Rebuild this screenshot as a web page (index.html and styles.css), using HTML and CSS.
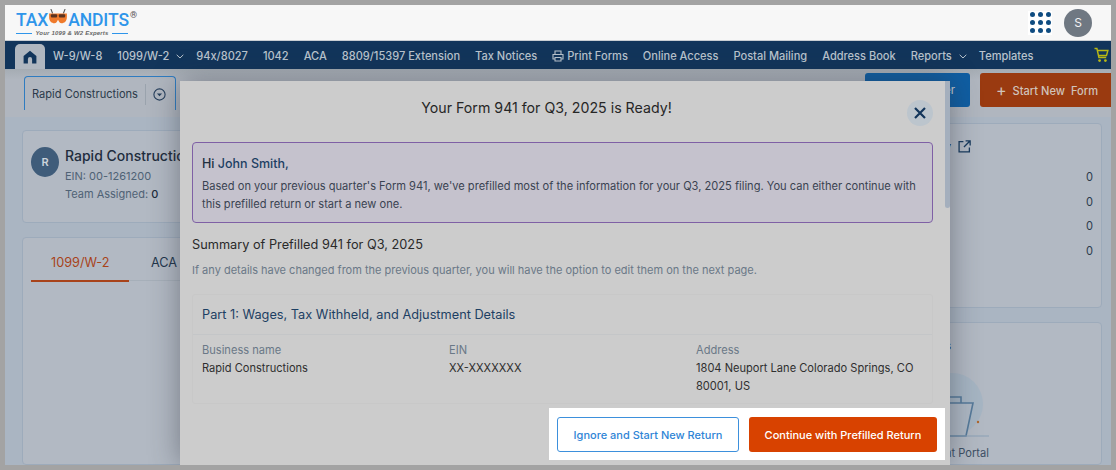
FILE: index.html
```html
<!DOCTYPE html>
<html lang="en">
<head>
<meta charset="utf-8">
<title>Form 941 Ready</title>
<link rel="stylesheet" href="styles.css">
</head>
<body>
<div class="frame">
  <header class="topbar">
    <div class="logo">
      <div class="logo-main">
        <span>TAX</span>
        <svg class="owl" width="20" height="16" viewBox="0 0 22 18">
          <path d="M3 0l2 5M19 0l-2 5" stroke="#555" stroke-width="1.2" fill="none"/>
          <path d="M1 5h20v4c0 5-3 7-6 7-2 0-3-2-4-4-1 2-2 4-4 4-3 0-6-2-6-7z" fill="#ef7a2c"/>
          <rect x="3" y="6" width="7" height="3.5" rx="1" fill="#5a3320"/>
          <rect x="12" y="6" width="7" height="3.5" rx="1" fill="#5a3320"/>
        </svg>
        <span>ANDITS</span>
        <span class="reg">®</span>
      </div>
      <div class="logo-tag"><i class="rule"></i><span>Your 1099 &amp; W2 Experts</span><i class="rule"></i></div>
    </div>
    <div class="top-actions">
      <div class="dots">
        <i></i><i></i><i></i><i></i><i></i><i></i><i></i><i></i><i></i>
      </div>
      <div class="user">S</div>
    </div>
  </header>

  <nav class="nav">
    <a class="home" aria-label="Home">
      <svg width="14" height="14" viewBox="0 0 14 14"><path d="M7 .8L.6 6v7.4h4.3V9.2a2.1 2.1 0 0 1 4.2 0v4.2h4.3V6z" fill="#12355b"/></svg>
    </a>
    <a>W-9/W-8</a>
    <a class="has-caret">1099/W-2<svg class="caret" width="8" height="5" viewBox="0 0 8 5"><path d="M.7.8L4 4l3.3-3.2" fill="none" stroke="#b9c3cd" stroke-width="1"/></svg></a>
    <a>94x/8027</a>
    <a>1042</a>
    <a>ACA</a>
    <a>8809/15397 Extension</a>
    <a>Tax Notices</a>
    <a class="print"><svg width="12" height="12" viewBox="0 0 12 12"><path d="M3 4V1h6v3M3 9H1V4.5h10V9H9M3 7.5h6V11H3z" fill="none" stroke="#b9c3cd" stroke-width="1.1"/></svg>Print Forms</a>
    <a>Online Access</a>
    <a>Postal Mailing</a>
    <a>Address Book</a>
    <a class="has-caret">Reports<svg class="caret" width="8" height="5" viewBox="0 0 8 5"><path d="M.7.8L4 4l3.3-3.2" fill="none" stroke="#b9c3cd" stroke-width="1"/></svg></a>
    <a>Templates</a>
    <svg class="cart" width="15" height="16" viewBox="0 0 15 16"><path d="M.5 1.5h2.4l2 9h7.3M3.3 3.5h10.6l-1.4 5H4.4" fill="none" stroke="#b9b814" stroke-width="1.4"/><circle cx="5.6" cy="13.6" r="1.4" fill="#b9b814"/><circle cx="11.4" cy="13.6" r="1.4" fill="#b9b814"/></svg>
  </nav>

  <section class="toolbar">
    <div class="biz-tab">
      <span class="biz-name">Rapid Constructions</span>
      <span class="biz-btn"><svg width="13" height="13" viewBox="0 0 13 13"><circle cx="6.5" cy="6.5" r="5.6" fill="none" stroke="#263f5c" stroke-width="1.1"/><path d="M3.9 5.4h5.2L6.5 8.3z" fill="#263f5c"/></svg></span>
    </div>
    <div class="tool-actions">
      <button class="btn-blue">Start New Filer</button>
      <button class="btn-rust"><span class="plus">+</span>Start New&nbsp; Form</button>
    </div>
  </section>

  <main class="main">
    <div class="col-left">
      <div class="card biz-card">
        <div class="avatar">R</div>
        <div>
          <div class="biz-title">Rapid Constructions</div>
          <div class="biz-meta">EIN: 00-1261200</div>
          <div class="biz-meta">Team Assigned: <b>0</b></div>
        </div>
      </div>
      <div class="card tabs-card">
        <div class="tabs">
          <span class="tab active">1099/W-2</span>
          <span class="tab">ACA</span>
        </div>
      </div>
    </div>
    <div class="col-right">
      <div class="card stats">
        <div class="stats-head"><span>Summary</span>
          <svg width="13" height="13" viewBox="0 0 12 12"><path d="M5 1.5H1v9.5h9.5V7M7 .8h4.2V5M11 1L5.5 6.5" fill="none" stroke="#173a5e" stroke-width="1.2"/></svg>
        </div>
        <div class="stat">0</div>
        <div class="stat">0</div>
        <div class="stat">0</div>
        <div class="stat">0</div>
      </div>
      <div class="card portal">
        <div class="portal-head">Tools</div>
        <div class="portal-item">
          <svg width="76" height="66" viewBox="0 0 76 66">
            <circle cx="33" cy="32" r="31" fill="#a6b5c3"/>
            <path d="M8 31h46l-7 33H14z" fill="#aeb8c4" stroke="#567a9a" stroke-width="1.6"/>
            <path d="M20 31v-6h22v6" fill="none" stroke="#567a9a" stroke-width="1.6"/>
            <circle cx="59" cy="50" r="1.2" fill="#b0662c"/>
            <path d="M22 64h48" stroke="#8aa0b5" stroke-width="1"/>
          </svg>
          <span>Client Portal</span>
        </div>
      </div>
    </div>
  </main>

  <div class="modal">
    <div class="modal-scroll">
      <div class="modal-head">
        <h2>Your Form 941 for Q3, 2025 is Ready!</h2>
        <button class="close" aria-label="Close">
          <svg width="12" height="12" viewBox="0 0 12 12"><path d="M1 1l10 10M11 1L1 11" stroke="#12355b" stroke-width="2.2" fill="none"/></svg>
        </button>
      </div>
      <div class="notice">
        <div class="hi">Hi <span>John Smith,</span></div>
        <p>Based on your previous quarter's Form 941, we've prefilled most of the information for your Q3, 2025 filing. You can either continue with this prefilled return or start a new one.</p>
      </div>
      <h3 class="summary">Summary of Prefilled 941 for Q3, 2025</h3>
      <p class="hint">If any details have changed from the previous quarter, you will have the option to edit them on the next page.</p>
      <div class="part">
        <div class="part-head">Part 1: Wages, Tax Withheld, and Adjustment Details</div>
        <div class="part-body">
          <div class="field"><label>Business name</label><div>Rapid Constructions</div></div>
          <div class="field"><label>EIN</label><div>XX-XXXXXXX</div></div>
          <div class="field"><label>Address</label><div>1804 Neuport Lane Colorado Springs, CO 80001, US</div></div>
        </div>
      </div>
    </div>
    <div class="modal-foot">
      <button class="btn-outline">Ignore and Start New Return</button>
      <button class="btn-primary">Continue with Prefilled Return</button>
    </div>
    <div class="thumb"></div>
  </div>
</div>
</body>
</html>
```

FILE: styles.css
```css
* { box-sizing: border-box; }
html, body { margin: 0; padding: 0; height: 100%; }
body { background: #a3a3a3; font-family: Inter, "Liberation Sans", sans-serif; overflow: hidden; }
button { font-family: inherit; cursor: pointer; }
.frame { position: relative; margin: 5px; width: 1106px; height: 460px; overflow: hidden; background: #aab5c2; display: flex; flex-direction: column; }

.topbar { height: 36px; flex: none; background: #f7f7f7; border-bottom: 1px solid #c9ced3; display: flex; justify-content: space-between; align-items: center; padding: 0 19px 0 11px; }
.logo { display: flex; flex-direction: column; margin-top: 1px; }
.logo-main { display: flex; align-items: center; font-family: Roboto, "Liberation Sans", sans-serif; font-size: 17.5px; font-weight: 500; line-height: 20px; color: #2e95ea; height: 20px; letter-spacing: -0.1px; }
.owl { margin: -6px 0 0 0; }
.reg { font-size: 9px; color: #555; align-self: flex-start; line-height: 10px; margin-left: 1px; }
.logo-tag { display: flex; align-items: center; gap: 3px; font-family: "Liberation Sans", sans-serif; font-size: 6px; font-style: italic; font-weight: 700; color: #666; line-height: 7px; width: 112px; letter-spacing: .2px; }
.rule { flex: 1; height: 1px; background: #2e95ea; }
.top-actions { display: flex; align-items: center; gap: 12px; }
.dots { width: 24px; height: 24px; background: #fff; display: grid; grid-template-columns: repeat(3, 5px); grid-auto-rows: 5px; gap: 3px; justify-content: center; align-content: center; }
.dots i { width: 5px; height: 5px; border-radius: 50%; background: #0f4c81; }
.user { width: 28px; height: 28px; border-radius: 50%; background: #6f7882; color: #f2f2f2; font-size: 12px; display: flex; align-items: center; justify-content: center; }

.nav { height: 28px; flex: none; background: #12355b; display: flex; align-items: center; padding: 1px 0 0 10px; font-size: 11.05px; font-weight: 500; color: #b9c3cd; gap: 15px; position: relative; }
.nav a { white-space: nowrap; display: flex; align-items: center; }
.home { width: 30px; height: 25px; margin: 3px -7px 0 0; align-self: flex-end; background: #b0b7c0; border-radius: 5px 5px 0 0; justify-content: center; }
.caret { margin: 2px 0 0 7px; }
.has-caret { margin-right: -3px; }
.print svg { margin-right: 3px; }
.cart { position: absolute; right: 2px; top: 6px; }

.toolbar { height: 48px; flex: none; background: linear-gradient(#a5acb3, #b0b6bf 22%); display: flex; justify-content: space-between; padding: 4px 0 0 19px; }
.biz-tab { width: 152px; height: 34px; margin-top: 3px; border: 1px solid #2f7cc0; border-bottom: 0; border-radius: 4px 4px 0 0; display: flex; align-items: flex-start; padding: 7px 0 0 7px; font-size: 11.1px; color: #2b3a4a; }
.biz-name { line-height: 20px; }
.biz-btn { margin-left: 7px; padding-left: 7px; border-left: 1px solid #9aa3ad; height: 21px; display: flex; align-items: center; }
.tool-actions { display: flex; gap: 10px; }
.tool-actions button { height: 34px; border: 0; font-size: 11.1px; font-weight: 500; color: #b9c3cd; }
.btn-blue { width: 105px; background: #0f5ea3; border-radius: 3px; text-align: right; padding: 0 15px 0 0; white-space: nowrap; }
.tool-actions .btn-rust { width: 131px; background: #9a3a10; border-radius: 3px 0 0 3px; padding: 0 0 0 3px; color: #d0c3bb; }
.plus { font-size: 16px; font-weight: 400; margin-right: 6px; vertical-align: -1px; }

.main { flex: 1; display: flex; gap: 18px; padding: 6px 9px 0 17px; min-height: 0; }
.card { background: #b2b9c3; border: 1px solid #9dabbb; border-radius: 4px; }
.col-left { width: 620px; padding-top: 7px; display: flex; flex-direction: column; gap: 14px; }
.col-right { flex: 1; display: flex; flex-direction: column; gap: 14px; }
.biz-card { height: 93px; flex: none; display: flex; gap: 6px; padding: 16px 8px; }
.avatar { width: 28px; height: 30px; border-radius: 50%; background: #3f5c7a; color: #ccd3da; font-size: 11px; font-weight: 600; display: flex; align-items: center; justify-content: center; }
.biz-title { font-size: 14px; font-weight: 500; color: #1f2d3d; line-height: 17px; }
.biz-meta { font-size: 11px; color: #4f6275; line-height: 18px; }
.biz-title + .biz-meta { margin-top: 3px; }
.biz-meta b { font-weight: 500; color: #1f2d3d; }
.tabs-card { flex: 1; padding: 13px 8px 0; }
.tabs { display: flex; border-bottom: 1px solid #a6afb9; height: 30px; font-size: 12.7px; line-height: 24px; color: #22364c; }
.tab { padding: 0 0 0 20px; width: 98px; margin-bottom: -1px; }
.tab.active { color: #a8431a; border-bottom: 2px solid #a8431a; height: 31px; }
.tab + .tab { margin-left: 22px; padding: 0; width: auto; }

.stats { height: 185px; flex: none; padding: 15px 8px 0 0; }
.stats-head { display: flex; justify-content: flex-end; align-items: center; gap: 7px; padding-right: 122px; height: 14px; font-size: 12.5px; font-weight: 600; color: #1f2d3d; margin-bottom: 12px; }
.stat { text-align: right; font-size: 11.1px; line-height: 24.7px; color: #2a3a4c; }
.portal { flex: 1; padding: 14px 0 0; display: flex; flex-direction: column; align-items: flex-end; position: relative; }
.portal-head { font-size: 12.5px; font-weight: 600; color: #1f2d3d; padding-right: 150px; height: 18px; line-height: 18px; }
.portal-item { display: flex; flex-direction: column; align-items: center; margin-right: 106px; margin-top: 17px; font-size: 11.1px; color: #3d4f63; gap: 8px; white-space: nowrap; }

.modal { position: absolute; left: 175px; top: 76px; width: 770px; height: 384px; background: #cccccc; box-shadow: 0 0 28px rgba(40, 45, 55, .45); display: flex; flex-direction: column; }
.modal-scroll { flex: 1; min-height: 0; padding: 0 17px 0 12px; overflow: hidden; }
.modal-head { height: 61px; display: flex; align-items: flex-start; justify-content: center; padding-right: 32px; position: relative; }
.modal-head h2 { margin: 17px 0 0; font-size: 14.2px; line-height: 20px; font-weight: 400; color: #262626; }
.close { position: absolute; right: 0; top: 19px; width: 26px; height: 26px; border-radius: 50%; border: 0; background: #bcc5cd; display: flex; align-items: center; justify-content: center; padding: 0; }
.notice { height: 81px; border: 1px solid #7f60a5; border-radius: 4px; background: #c5c2cd; padding: 12px 9px 0; }
.hi { font-size: 12.5px; line-height: 18px; font-weight: 500; color: #22303f; }
.hi span { color: #1d3f63; }
.notice p { margin: 5px 0 0; font-size: 11.1px; line-height: 17.5px; color: #3a4351; }
.summary { margin: 13px 0 0; font-size: 12.75px; line-height: 18px; font-weight: 400; color: #2a2a2a; }
.hint { margin: 7px 0 0; font-size: 11px; line-height: 18px; color: #6a7887; }
.part { margin-top: 15px; height: 110px; border: 1px solid #c8c8c8; border-radius: 3px; }
.part-head { height: 40px; padding-left: 9px; line-height: 40px; font-size: 12.75px; color: #1d3f63; border-bottom: 1px solid #c4c6c8; }
.part-body { display: grid; grid-template-columns: repeat(3, 247px); padding: 6px 0 0 9px; font-size: 11.1px; line-height: 18px; color: #2f2f2f; }
.field { padding-right: 16px; }
.field label { display: block; color: #6a7887; }
.modal-foot { flex: none; height: 52px; margin: 0 5px 5px 0; align-self: flex-end; width: 396px; background: #fff; display: flex; gap: 10px; padding: 9px 8px 0; }
.modal-foot button { height: 35px; border-radius: 3px; font-size: 11px; font-weight: 500; padding: 0; }
.btn-outline { width: 182px; background: #fff; border: 1px solid #3d90dc; color: #2f85d6; }
.btn-primary { width: 188px; background: #d84200; border: 0; color: #fff; }
.thumb { position: absolute; right: 0; top: 0; width: 5px; height: 127px; background: #a4afbd; border-radius: 0 0 3px 3px; }
```
